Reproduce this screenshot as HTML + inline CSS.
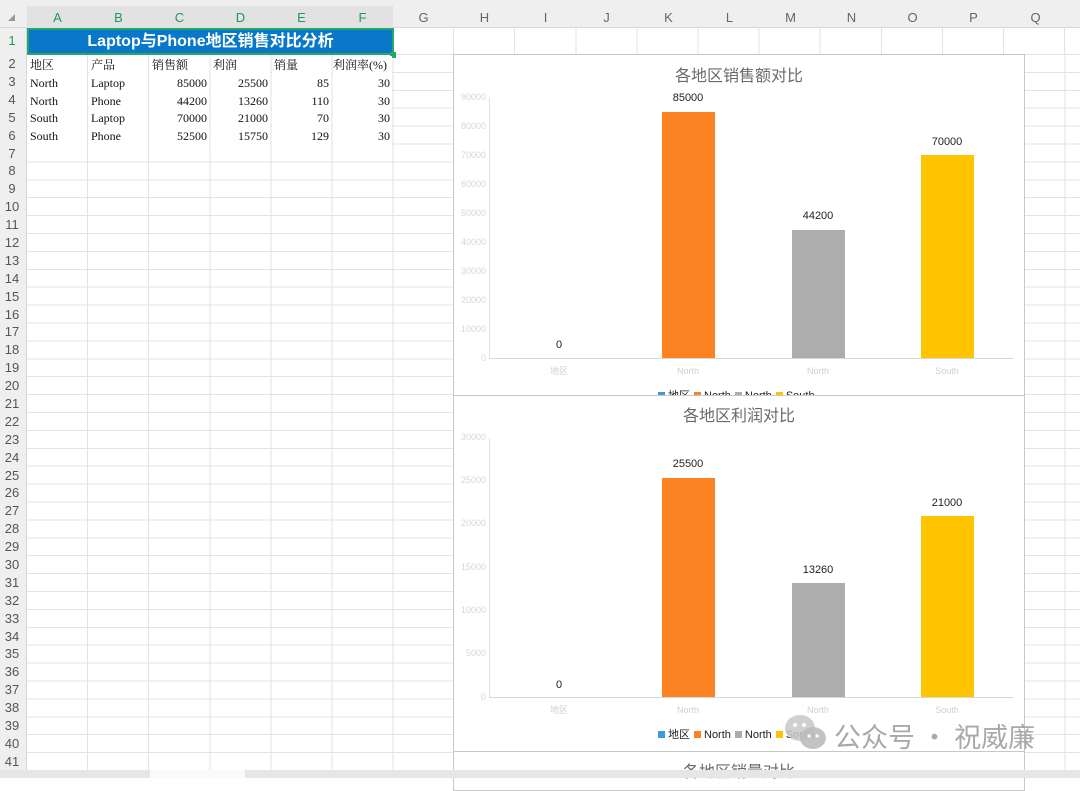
<!DOCTYPE html>
<html><head><meta charset="utf-8"><style>
*{margin:0;padding:0;box-sizing:border-box}
body{width:1080px;height:778px;overflow:hidden;background:#fff;position:relative;font-family:"Liberation Sans","Noto Sans CJK SC",sans-serif}
.abs{position:absolute}
#top{left:0;top:0;width:1080px;height:28px;background:#efefef;border-bottom:1px solid #d8d8d8}
#colsel{left:27px;top:6px;width:366px;height:22px;background:#e2e2e2}
.ch{position:absolute;top:8px;width:61px;text-align:center;font-size:13px;color:#666;line-height:20px}
.ch.g{color:#1c9a55}
#rh{left:0;top:28px;width:27px;height:750px;background:#efefef;border-right:1px solid #d8d8d8}
.rn{position:absolute;left:0;width:24px;text-align:center;font-size:13px;color:#555}
#grid{left:27px;top:55px;width:1053px;height:723px;
background-image:repeating-linear-gradient(to right,transparent 0,transparent 60.1px,#e3e3e3 60.1px,#e3e3e3 61.1px),
repeating-linear-gradient(to bottom,transparent 0,transparent 16.9px,#e3e3e3 16.9px,#e3e3e3 17.9px)}
#row1grid{left:393px;top:27px;width:687px;height:28px;
background-image:repeating-linear-gradient(to right,transparent 0,transparent 60.1px,#e3e3e3 60.1px,#e3e3e3 61.1px);border-bottom:1px solid #e3e3e3}
#title{left:27px;top:28px;width:367px;height:27px;border:2px solid #23a86a;background:#0a78c8;padding:1px}
#title div{width:100%;height:100%;background:#0a78c8;color:#fff;font-weight:bold;font-size:16px;text-align:center;line-height:22px}
#handle{left:390px;top:52px;width:6px;height:6px;background:#23a86a}
.c{position:absolute;font-family:"Liberation Serif","Noto Serif CJK SC",serif;font-size:12px;color:#111;height:17.9px;line-height:18px;width:61px;padding:0 2px;background:#fff}
.r{text-align:right}
.chart{position:absolute;left:453px;width:572px;background:#fff;border:1px solid #c8c8c8}
.ct{position:absolute;left:0;width:100%;text-align:center;font-size:16px;color:#6a6a6a}
.yl{position:absolute;right:538px;font-size:9px;line-height:11px;color:#d6d6d6;text-align:right}
.bar{position:absolute;width:53px}
.vl{position:absolute;width:80px;text-align:center;font-size:11px;line-height:13px;color:#222}
.xl{position:absolute;width:80px;text-align:center;font-size:9px;line-height:11px;color:#d0d0d0}
.lg{position:absolute;font-size:11px;line-height:13px;color:#222;white-space:nowrap}
.lg i{display:inline-block;width:7px;height:7px;margin:0 3px 0 4px}
</style></head><body>
<div id="top" class="abs"></div>
<div id="colsel" class="abs"></div>
<div class="abs" style="left:8px;top:14px;width:0;height:0;border-left:7px solid transparent;border-bottom:7px solid #999"></div>
<div class="ch g" style="left:27px">A</div><div class="ch g" style="left:88px">B</div><div class="ch g" style="left:149px">C</div><div class="ch g" style="left:210px">D</div><div class="ch g" style="left:271px">E</div><div class="ch g" style="left:332px">F</div>
<div class="ch" style="left:393px">G</div><div class="ch" style="left:454px">H</div><div class="ch" style="left:515px">I</div><div class="ch" style="left:576px">J</div><div class="ch" style="left:638px">K</div><div class="ch" style="left:699px">L</div><div class="ch" style="left:760px">M</div><div class="ch" style="left:821px">N</div><div class="ch" style="left:882px">O</div><div class="ch" style="left:943px">P</div><div class="ch" style="left:1005px">Q</div>
<div id="rh" class="abs"></div>
<div id="grid" class="abs"></div>
<div id="row1grid" class="abs"></div>
<div class="rn" style="top:33px;color:#1c9a55">1</div>
<div class="rn" style="top:56px">2</div><div class="rn" style="top:74px">3</div><div class="rn" style="top:92px">4</div><div class="rn" style="top:110px">5</div><div class="rn" style="top:128px">6</div><div class="rn" style="top:146px">7</div><div class="rn" style="top:163px">8</div><div class="rn" style="top:181px">9</div><div class="rn" style="top:199px">10</div><div class="rn" style="top:217px">11</div><div class="rn" style="top:235px">12</div><div class="rn" style="top:253px">13</div><div class="rn" style="top:271px">14</div><div class="rn" style="top:289px">15</div><div class="rn" style="top:307px">16</div><div class="rn" style="top:324px">17</div><div class="rn" style="top:342px">18</div><div class="rn" style="top:360px">19</div><div class="rn" style="top:378px">20</div><div class="rn" style="top:396px">21</div><div class="rn" style="top:414px">22</div><div class="rn" style="top:432px">23</div><div class="rn" style="top:450px">24</div><div class="rn" style="top:468px">25</div><div class="rn" style="top:485px">26</div><div class="rn" style="top:503px">27</div><div class="rn" style="top:521px">28</div><div class="rn" style="top:539px">29</div><div class="rn" style="top:557px">30</div><div class="rn" style="top:575px">31</div><div class="rn" style="top:593px">32</div><div class="rn" style="top:611px">33</div><div class="rn" style="top:629px">34</div><div class="rn" style="top:646px">35</div><div class="rn" style="top:664px">36</div><div class="rn" style="top:682px">37</div><div class="rn" style="top:700px">38</div><div class="rn" style="top:718px">39</div><div class="rn" style="top:736px">40</div><div class="rn" style="top:754px">41</div>

<div id="title" class="abs"><div>Laptop与Phone地区销售对比分析</div></div>
<div id="handle" class="abs"></div>

<div class="c" style="left:28px;top:56px;width:59px">地区</div><div class="c" style="left:89px;top:56px;width:59px">产品</div><div class="c" style="left:150px;top:56px;width:59px">销售额</div><div class="c" style="left:211px;top:56px;width:59px">利润</div><div class="c" style="left:272px;top:56px;width:59px">销量</div><div class="c" style="left:333px;top:56px;width:59px;padding:0">利润率(%)</div>
<div class="c" style="left:28px;top:74px;width:59px">North</div><div class="c" style="left:89px;top:74px;width:59px">Laptop</div><div class="c r" style="left:150px;top:74px;width:59px">85000</div><div class="c r" style="left:211px;top:74px;width:59px">25500</div><div class="c r" style="left:272px;top:74px;width:59px">85</div><div class="c r" style="left:333px;top:74px;width:59px">30</div>
<div class="c" style="left:28px;top:92px;width:59px">North</div><div class="c" style="left:89px;top:92px;width:59px">Phone</div><div class="c r" style="left:150px;top:92px;width:59px">44200</div><div class="c r" style="left:211px;top:92px;width:59px">13260</div><div class="c r" style="left:272px;top:92px;width:59px">110</div><div class="c r" style="left:333px;top:92px;width:59px">30</div>
<div class="c" style="left:28px;top:109px;width:59px">South</div><div class="c" style="left:89px;top:109px;width:59px">Laptop</div><div class="c r" style="left:150px;top:109px;width:59px">70000</div><div class="c r" style="left:211px;top:109px;width:59px">21000</div><div class="c r" style="left:272px;top:109px;width:59px">70</div><div class="c r" style="left:333px;top:109px;width:59px">30</div>
<div class="c" style="left:28px;top:127px;width:59px">South</div><div class="c" style="left:89px;top:127px;width:59px">Phone</div><div class="c r" style="left:150px;top:127px;width:59px">52500</div><div class="c r" style="left:211px;top:127px;width:59px">15750</div><div class="c r" style="left:272px;top:127px;width:59px">129</div><div class="c r" style="left:333px;top:127px;width:59px">30</div>

<!-- chart 1 -->
<div class="chart" style="top:54px;height:342px;overflow:hidden">
 <div class="ct" style="top:7px">各地区销售额对比</div>
 <div class="yl" style="top:37px">90000</div><div class="yl" style="top:66px">80000</div><div class="yl" style="top:95px">70000</div><div class="yl" style="top:124px">60000</div><div class="yl" style="top:153px">50000</div><div class="yl" style="top:182px">40000</div><div class="yl" style="top:211px">30000</div><div class="yl" style="top:240px">20000</div><div class="yl" style="top:269px">10000</div><div class="yl" style="top:298px">0</div>
 <div class="abs" style="left:35px;top:43px;width:1px;height:261px;background:#e0e0e0"></div>
 <div class="abs" style="left:35px;top:303px;width:524px;height:1px;background:#d8d8d8"></div>
 <div class="bar" style="left:208px;top:57px;height:246px;background:#fd8221"></div>
 <div class="bar" style="left:338px;top:175px;height:128px;background:#adadad"></div>
 <div class="bar" style="left:467px;top:100px;height:203px;background:#fec400"></div>
 <div class="vl" style="left:65px;top:284px">0</div><div class="vl" style="left:194px;top:37px">85000</div><div class="vl" style="left:324px;top:155px">44200</div><div class="vl" style="left:453px;top:81px">70000</div>
 <div class="xl" style="left:65px;top:311px">地区</div><div class="xl" style="left:194px;top:311px">North</div><div class="xl" style="left:324px;top:311px">North</div><div class="xl" style="left:453px;top:311px">South</div>
 <div class="lg" style="left:200px;top:335px"><i style="background:#3c9bdc"></i>地区<i style="background:#fd8221"></i>North<i style="background:#adadad"></i>North<i style="background:#fec400"></i>South</div>
</div>
<!-- chart 2 -->
<div class="chart" style="top:395px;height:357px">
 <div class="ct" style="top:6px">各地区利润对比</div>
 <div class="yl" style="top:36px">30000</div><div class="yl" style="top:79px">25000</div><div class="yl" style="top:122px">20000</div><div class="yl" style="top:166px">15000</div><div class="yl" style="top:209px">10000</div><div class="yl" style="top:252px">5000</div><div class="yl" style="top:296px">0</div>
 <div class="abs" style="left:35px;top:42px;width:1px;height:260px;background:#e0e0e0"></div>
 <div class="abs" style="left:35px;top:301px;width:524px;height:1px;background:#d8d8d8"></div>
 <div class="bar" style="left:208px;top:82px;height:219px;background:#fd8221"></div>
 <div class="bar" style="left:338px;top:187px;height:114px;background:#adadad"></div>
 <div class="bar" style="left:467px;top:120px;height:181px;background:#fec400"></div>
 <div class="vl" style="left:65px;top:283px">0</div><div class="vl" style="left:194px;top:62px">25500</div><div class="vl" style="left:324px;top:168px">13260</div><div class="vl" style="left:453px;top:101px">21000</div>
 <div class="xl" style="left:65px;top:309px">地区</div><div class="xl" style="left:194px;top:309px">North</div><div class="xl" style="left:324px;top:309px">North</div><div class="xl" style="left:453px;top:309px">South</div>
 <div class="lg" style="left:200px;top:333px"><i style="background:#3c9bdc"></i>地区<i style="background:#fd8221"></i>North<i style="background:#adadad"></i>North<i style="background:#fec400"></i>South</div>
</div>
<!-- chart 3 -->
<div class="chart" style="top:751px;height:40px">
 <div class="ct" style="top:6px">各地区销量对比</div>
</div>
<!-- watermark -->
<svg class="abs" style="left:782px;top:712px" width="50" height="42" viewBox="0 0 50 42">
 <ellipse cx="18" cy="16" rx="15" ry="13" fill="#c8c8c8" opacity=".85"/>
 <ellipse cx="31" cy="26" rx="13" ry="11" fill="#bdbdbd" opacity=".9"/>
 <circle cx="13" cy="13" r="2" fill="#fff"/><circle cx="22" cy="13" r="2" fill="#fff"/>
 <circle cx="27" cy="24" r="1.6" fill="#fff"/><circle cx="35" cy="24" r="1.6" fill="#fff"/>
</svg>
<div class="abs" style="left:834px;top:716px;font-size:27px;color:#a9a9a9;white-space:nowrap;font-family:'Noto Sans CJK SC',sans-serif">公众号 · 祝威廉</div>
<!-- bottom strip -->
<div class="abs" style="left:0;top:770px;width:1080px;height:8px;background:#e6e6e6"></div>
<div class="abs" style="left:150px;top:770px;width:95px;height:8px;background:#fafafa"></div>
</body></html>
